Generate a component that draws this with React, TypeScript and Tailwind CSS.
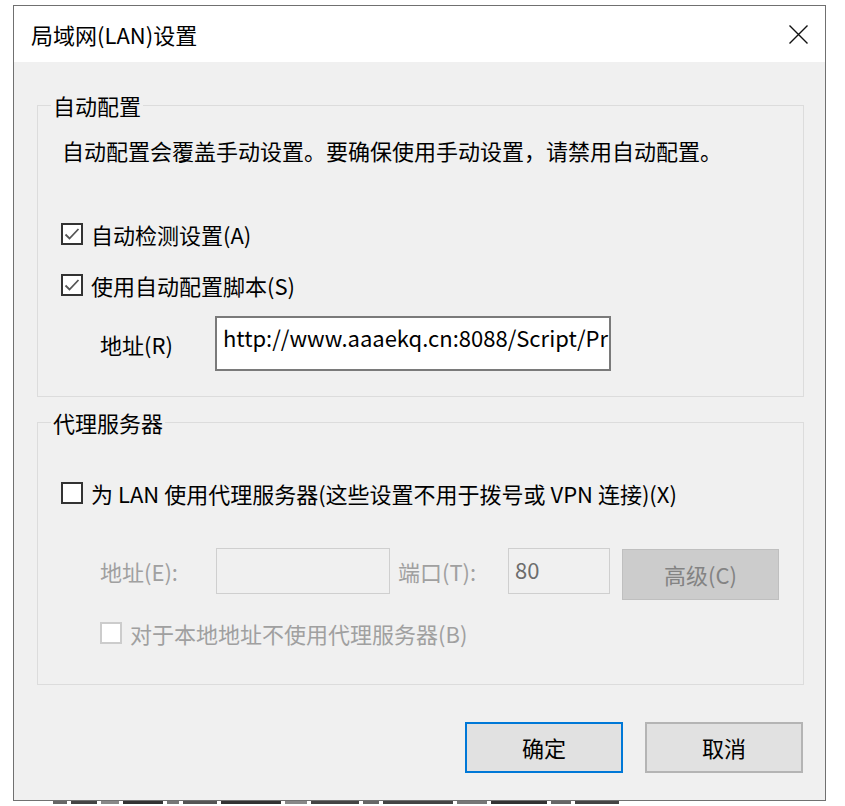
import { ReactNode } from "react";

const Check = ({
  checked,
  disabled,
  children,
  className,
}: {
  checked?: boolean;
  disabled?: boolean;
  children: ReactNode;
  className?: string;
}) => (
  <div className={"flex items-center h-[24px] " + (className ?? "")}>
    <div
      className={
        "w-[22px] h-[22px] bg-white flex items-center justify-center border-2 " +
        (disabled ? "border-[#cccccc]" : "border-[#333333]")
      }
    >
      {checked && (
        <svg width="18" height="18" viewBox="0 0 18 18">
          <polyline
            points="2.5,9.5 6.5,13.5 15.5,4"
            fill="none"
            stroke="#555555"
            strokeWidth="1.8"
          />
        </svg>
      )}
    </div>
    <span
      className={
        "ml-[8px] leading-[24px] " + (disabled ? "text-[#a0a0a0]" : "text-black")
      }
    >
      {children}
    </span>
  </div>
);

const Group = ({
  title,
  className,
  children,
}: {
  title: string;
  className?: string;
  children: ReactNode;
}) => (
  <div
    className={
      "ml-[23px] w-[767px] border border-[#dcdcdc] box-border " + (className ?? "")
    }
  >
    <div className="-mt-[13px] ml-[13px] px-[2px] w-fit h-[24px] leading-[24px] bg-[#f0f0f0]">
      {title}
    </div>
    {children}
  </div>
);

const LanSettings = () => {
  return (
    <div className="w-[845px] h-[806px] bg-white overflow-hidden pl-[13px] pt-[5px] text-[22px] text-black font-['Noto_Sans_CJK_SC','Microsoft_YaHei',sans-serif]">
      <div className="w-[813px] h-[796px] border border-[#707070] bg-[#f0f0f0] flex flex-col box-border">
        {/* title bar */}
        <div className="h-[56px] bg-white flex items-center justify-between pl-[17px] pr-[16px]">
          <span className="leading-[24px] text-[22px]">局域网(LAN)设置</span>
          <svg width="21" height="21" viewBox="0 0 21 21">
            <path d="M1.5 1.5 L19.5 19.5 M19.5 1.5 L1.5 19.5" stroke="#111" strokeWidth="1.4" />
          </svg>
        </div>

        <Group title="自动配置" className="mt-[43px] h-[292px]">
          <div className="mt-[21px] ml-[24px] leading-[24px]">
            自动配置会覆盖手动设置。要确保使用手动设置，请禁用自动配置。
          </div>
          <Check checked className="mt-[60px] ml-[23px]">
            自动检测设置(A)
          </Check>
          <Check checked className="mt-[27px] ml-[23px]">
            使用自动配置脚本(S)
          </Check>
          <div className="mt-[19px] flex items-center">
            <span className="ml-[62px] w-[115px] leading-[24px]">地址(R)</span>
            <div className="w-[396px] h-[55px] border-2 border-[#7a7a7a] bg-white whitespace-nowrap pl-[6px] pt-[7px] leading-[24px]">
              http://www.aaaekq.cn:8088/Script/Pr
            </div>
          </div>
        </Group>

        <Group title="代理服务器" className="mt-[25px] h-[263px]">
          <Check className="mt-[47px] ml-[23px]">
            为 LAN 使用代理服务器(这些设置不用于拨号或 VPN 连接)(X)
          </Check>
          <div className="mt-[43px] flex items-start text-[#a0a0a0]">
            <span className="ml-[62px] w-[116px] h-[46px] leading-[46px]">地址(E):</span>
            <div className="w-[174px] h-[46px] border border-[#cfcfcf] bg-[#f0f0f0]" />
            <span className="ml-[8px] w-[110px] h-[46px] leading-[46px]">端口(T):</span>
            <div className="w-[102px] h-[46px] border border-[#cfcfcf] bg-[#f0f0f0] pl-[6px] pt-[8px] leading-[24px] text-[#6d6d6d]">
              80
            </div>
            <div className="ml-[12px] mt-[1px] w-[157px] h-[51px] border border-[#bfbfbf] bg-[#cccccc] flex items-center justify-center text-[#838383]">
              高级(C)
            </div>
          </div>
          <Check disabled className="mt-[21px] ml-[62px]">
            对于本地地址不使用代理服务器(B)
          </Check>
        </Group>

        <div className="mt-[37px] flex justify-end gap-[22px] pr-[22px]">
          <button className="w-[158px] h-[51px] border-2 border-[#0078d7] bg-[#e1e1e1] flex items-center justify-center">
            确定
          </button>
          <button className="w-[158px] h-[51px] border-2 border-[#b4b4b4] bg-[#e1e1e1] flex items-center justify-center">
            取消
          </button>
        </div>
      </div>

      {/* bits of the window behind */}
      <div className="flex items-start h-[5px] ml-[40px] gap-[4px]">
        <div className="w-[14px] h-[3px] bg-[#666]" />
        <div className="w-[26px] h-[3px] bg-[#444]" />
        <div className="w-[18px] h-[3px] bg-[#888]" />
        <div className="w-[40px] h-[3px] bg-[#333]" />
        <div className="w-[12px] h-[3px] bg-[#777]" />
        <div className="w-[34px] h-[3px] bg-[#555]" />
        <div className="w-[60px] h-[3px] bg-[#333]" />
        <div className="w-[22px] h-[3px] bg-[#888]" />
        <div className="w-[48px] h-[3px] bg-[#444]" />
        <div className="w-[16px] h-[3px] bg-[#666]" />
        <div className="w-[70px] h-[3px] bg-[#444]" />
        <div className="w-[30px] h-[3px] bg-[#777]" />
        <div className="w-[56px] h-[3px] bg-[#333]" />
        <div className="w-[20px] h-[3px] bg-[#666]" />
        <div className="w-[44px] h-[3px] bg-[#444]" />
      </div>
    </div>
  );
};

export default function App() {
  return <LanSettings />;
}
